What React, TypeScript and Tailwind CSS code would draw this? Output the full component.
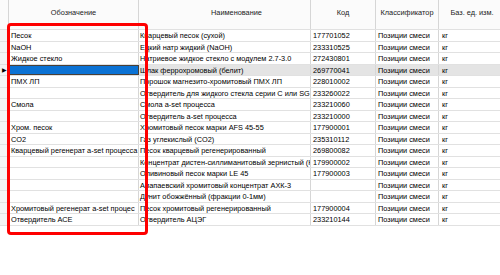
import React from "react";

type Row = { a: string; b: string; c: string; d: string; e: string; sel?: boolean };

const rows: Row[] = [
  { a: "Песок", b: "Кварцевый песок (сухой)", c: "177701052", d: "Позиции смеси", e: "кг" },
  { a: "NaOH", b: "Едкий натр жидкий (NaOH)", c: "233310525", d: "Позиции смеси", e: "кг" },
  { a: "Жидкое стекло", b: "Натриевое жидкое стекло с модулем 2.7-3.0", c: "272430801", d: "Позиции смеси", e: "кг" },
  { a: "", b: "Шлак феррохромовый (белит)", c: "269770041", d: "Позиции смеси", e: "кг", sel: true },
  { a: "ПМХ ЛП", b: "Порошок магнезито-хромитовый ПМХ ЛП", c: "228010002", d: "Позиции смеси", e: "кг" },
  { a: "", b: "Отвердитель для жидкого стекла серии С или SG", c: "233260022", d: "Позиции смеси", e: "кг" },
  { a: "Смола", b: "Смола a-set процесса", c: "233210060", d: "Позиции смеси", e: "кг" },
  { a: "", b: "Отвердитель a-set процесса", c: "233210000", d: "Позиции смеси", e: "кг" },
  { a: "Хром. песок", b: "Хромитовый песок марки AFS 45-55", c: "177900001", d: "Позиции смеси", e: "кг" },
  { a: "CO2", b: "Газ углекислый (CO2)", c: "235310112", d: "Позиции смеси", e: "кг" },
  { a: "Кварцевый регенерат a-set процесса", b: "Песок кварцевый регенерированный", c: "269800082", d: "Позиции смеси", e: "кг" },
  { a: "", b: "Концентрат дистен-силлиманитовый зернистый (К", c: "179900002", d: "Позиции смеси", e: "кг" },
  { a: "", b: "Оливиновый песок марки LE 45", c: "177900003", d: "Позиции смеси", e: "кг" },
  { a: "", b: "Алапаевский хромитовый концентрат АХК-3", c: "", d: "Позиции смеси", e: "кг" },
  { a: "", b: "Дунит обожжённый (фракции 0-1мм)", c: "", d: "Позиции смеси", e: "кг" },
  { a: "Хромитовый регенерат a-set процес", b: "Песок хромитовый регенерированный", c: "177900004", d: "Позиции смеси", e: "кг" },
  { a: "Отвердитель АСЕ", b: "Отвердитель АЦЭГ", c: "233210144", d: "Позиции смеси", e: "кг" },
];

const font = { fontFamily: '"Liberation Sans", Arial, sans-serif' };

export default function App() {
  return (
    <div
      className="relative w-[500px] h-[275px] bg-white overflow-hidden flex text-[7.35px] text-black"
      style={font}
    >
      {/* left clipped panel */}
      <div className="w-[3px] h-full overflow-hidden flex justify-end pt-[57px] bg-white">
        <span className="whitespace-nowrap leading-[11px]">е</span>
      </div>
      <div className="w-[2px] h-full bg-[#c9cbd0]" />

      {/* grid */}
      <div className="flex-1 flex flex-col">
        {/* header */}
        <div className="flex h-[29px] bg-[#fbfbfb] text-[#222]">
          <div className="w-[9px] shrink-0 border-r border-[#d6d6d6]" />
          <div className="w-[130px] shrink-0 border-r border-[#d6d6d6] flex items-center justify-center pb-[3px]">Обозначение</div>
          <div className="w-[172px] shrink-0 border-r border-[#d6d6d6] flex items-center justify-center pl-[24px] pb-[3px]">Наименование</div>
          <div className="w-[65px] shrink-0 border-r border-[#d6d6d6] flex items-center justify-center pb-[3px]">Код</div>
          <div className="w-[63px] shrink-0 border-r border-[#d6d6d6] flex items-center justify-center pb-[3px]">Классификатор</div>
          <div className="w-[66px] shrink-0 flex items-center justify-center pb-[3px] whitespace-nowrap">Баз. ед. изм.</div>
        </div>
        {/* rows */}
        {rows.map((r, i) => (
          <div
            key={i}
            className={`flex h-[11.5px] leading-[11px] border-t border-[#e1e1e1] whitespace-nowrap ${r.sel ? "bg-[#e4e4e4]" : "bg-white"}`}
          >
            <div className="w-[9px] shrink-0 border-r border-[#d6d6d6] bg-[#f4f4f4] flex items-center justify-end pr-[1px]">
              {r.sel ? <span className="text-[6px] leading-none">▶</span> : null}
            </div>
            <div
              className={`w-[130px] shrink-0 overflow-hidden px-[2px] ${
                r.sel ? "bg-[#0b72d4] border border-[#4a3f35]" : "border-r border-[#d6d6d6]"
              }`}
            >
              {r.a}
            </div>
            <div className="w-[172px] shrink-0 overflow-hidden pl-[1px] border-r border-[#d6d6d6]">{r.b}</div>
            <div className="w-[65px] shrink-0 overflow-hidden pl-[2px] border-r border-[#d6d6d6]">{r.c}</div>
            <div className="w-[63px] shrink-0 overflow-hidden pl-[2px] border-r border-[#d6d6d6]">{r.d}</div>
            <div className="w-[66px] shrink-0 overflow-hidden pl-[3px]">{r.e}</div>
          </div>
        ))}
        <div className="border-t border-[#e1e1e1] w-[505px]" />
      </div>

      {/* red annotation box */}
      <div className="absolute left-[7px] top-[23px] w-[141px] h-[212px] border-[3px] border-[#fe0000] rounded-[4px]" />
    </div>
  );
}
